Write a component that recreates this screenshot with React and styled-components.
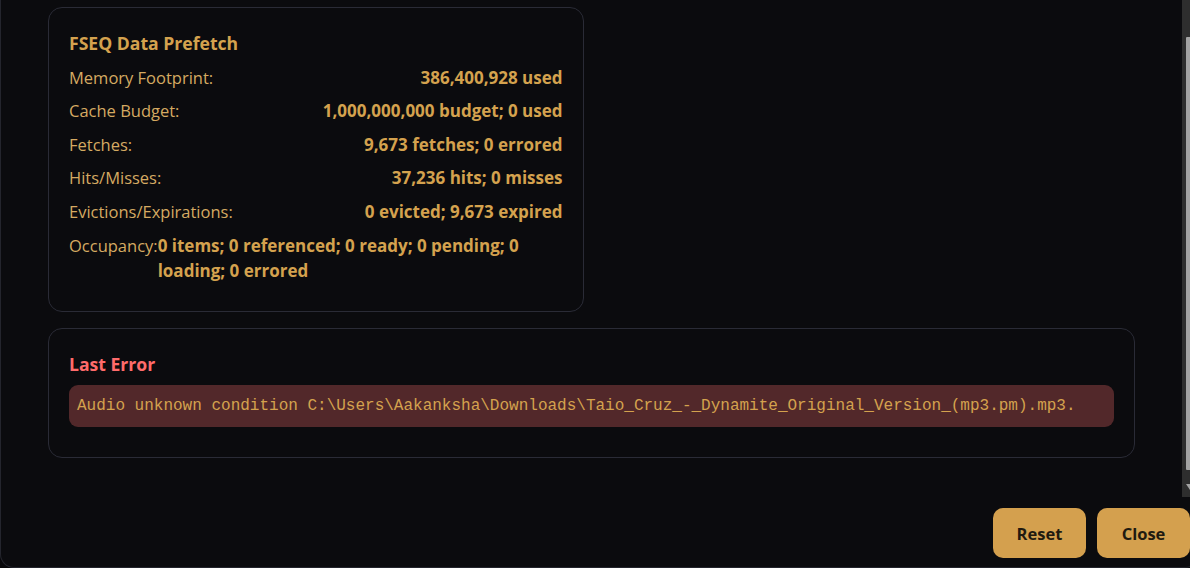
import { useLayoutEffect, useRef } from 'react'
import styled, { createGlobalStyle } from 'styled-components'

const GlobalStyle = createGlobalStyle`
  html, body {
    margin: 0;
    background: #08080a;
  }
  body {
    font-family: "Open Sans", "Noto Sans", sans-serif;
    color: #d4a24e;
  }
`

const Viewport = styled.div`
  width: 1190px;
  height: 568px;
  overflow: hidden;
  display: flex;
  flex-direction: column;
  justify-content: flex-end;
  align-items: flex-start;
`

const Dialog = styled.div`
  flex: none;
  width: 1199px;
  height: 568px;
  box-sizing: border-box;
  display: flex;
  flex-direction: column;
  background: #0b0b0e;
  border: 1px solid #24252d;
  border-top: none;
  border-radius: 0 0 14px 14px;
`

const ScrollArea = styled.div`
  flex: none;
  height: 497px;
  display: flex;
`

const ScrollBody = styled.div`
  flex: 1;
  min-width: 0;
  box-sizing: border-box;
  overflow: hidden;
  padding: 40px 47px 40px;
`

/* classic scrollbar rail: track, thumb and the step arrow under it */
const ScrollRail = styled.div`
  flex: none;
  width: 16px;
  box-sizing: border-box;
  display: flex;
  flex-direction: column;
  align-items: stretch;
  padding: 37px 3px 0 4px;
  background: #2e2e2e;
`

const ScrollThumb = styled.div`
  height: 433px;
  background: #a3a3a3;
  border-radius: 1px;
`

const StepArrow = styled.svg`
  display: block;
  margin: 12px 0 0 -1px;
  width: 10px;
  height: 10px;
`

const Grid = styled.div`
  display: grid;
  grid-template-columns: 1fr 1fr;
  gap: 16px;
`

const Card = styled.section`
  grid-column: ${({ $wide }) => ($wide ? '1 / -1' : 'auto')};
  display: flex;
  flex-direction: column;
  gap: 8px;
  padding: 23px 20px 27px;
  border: 1px solid #2a2b36;
  border-radius: 14px;
  background: #0b0b0e;
  line-height: 25.6px;
`

const CardTitle = styled.h3`
  margin: 0;
  font-size: 17.6px;
  font-weight: 700;
  line-height: 25.6px;
  color: ${({ $tone }) => ($tone === 'error' ? '#ff6b6b' : '#d4a24e')};
`

const StatRow = styled.div`
  display: flex;
  justify-content: space-between;
`

const StatLabel = styled.span`
  flex: none;
  font-size: 16.5px;
  color: #d5aa62;
`

const StatValue = styled.span`
  font-size: 17px;
  font-weight: 700;
  color: #d4a24e;
`

const ErrorText = styled.pre`
  margin: 0 0 3px;
  padding: 8px;
  border-radius: 9px;
  background: #52282a;
  color: #d4a24e;
  font-family: "Liberation Mono", "DejaVu Sans Mono", monospace;
  font-size: 16px;
  line-height: 26px;
  white-space: pre-wrap;
  word-break: break-all;
`

const Footer = styled.div`
  display: flex;
  justify-content: flex-end;
  gap: 11px;
  padding: 11px 8px 9px;
`

const Button = styled.button`
  width: 93px;
  height: 50px;
  border: none;
  border-radius: 10px;
  background: #d4a04e;
  color: #211a10;
  font-family: inherit;
  font-size: 16.5px;
  font-weight: 700;
  cursor: pointer;
`

const prefetchStats = [
  ['Memory Footprint:', '386,400,928 used'],
  ['Cache Budget:', '1,000,000,000 budget; 0 used'],
  ['Fetches:', '9,673 fetches; 0 errored'],
  ['Hits/Misses:', '37,236 hits; 0 misses'],
  ['Evictions/Expirations:', '0 evicted; 9,673 expired'],
  ['Occupancy:', '0 items; 0 referenced; 0 ready; 0 pending; 0 loading; 0 errored']
]

const lastError =
  'Audio unknown condition C:\\Users\\Aakanksha\\Downloads\\Taio_Cruz_-_Dynamite_Original_Version_(mp3.pm).mp3.'

export default function App () {
  const bodyRef = useRef(null)

  useLayoutEffect(() => {
    if (bodyRef.current) bodyRef.current.scrollTop = 33
  }, [])

  return (
    <>
      <GlobalStyle />
      <Viewport>
        <Dialog role='dialog'>
          <ScrollArea>
            <ScrollBody ref={bodyRef}>
              <Grid>
                <Card>
                  <CardTitle>FSEQ Data Prefetch</CardTitle>
                  {prefetchStats.map(([label, value]) => (
                    <StatRow key={label}>
                      <StatLabel>{label}</StatLabel>
                      <StatValue>{value}</StatValue>
                    </StatRow>
                  ))}
                </Card>
                <Card $wide>
                  <CardTitle $tone='error'>Last Error</CardTitle>
                  <ErrorText>{lastError}</ErrorText>
                </Card>
              </Grid>
            </ScrollBody>
            <ScrollRail>
              <ScrollThumb />
              <StepArrow viewBox='0 0 10 10'>
                <path d='M1 2 L9 2 L5 8 Z' fill='#a3a3a3' />
              </StepArrow>
            </ScrollRail>
          </ScrollArea>
          <Footer>
            <Button>Reset</Button>
            <Button>Close</Button>
          </Footer>
        </Dialog>
      </Viewport>
    </>
  )
}
